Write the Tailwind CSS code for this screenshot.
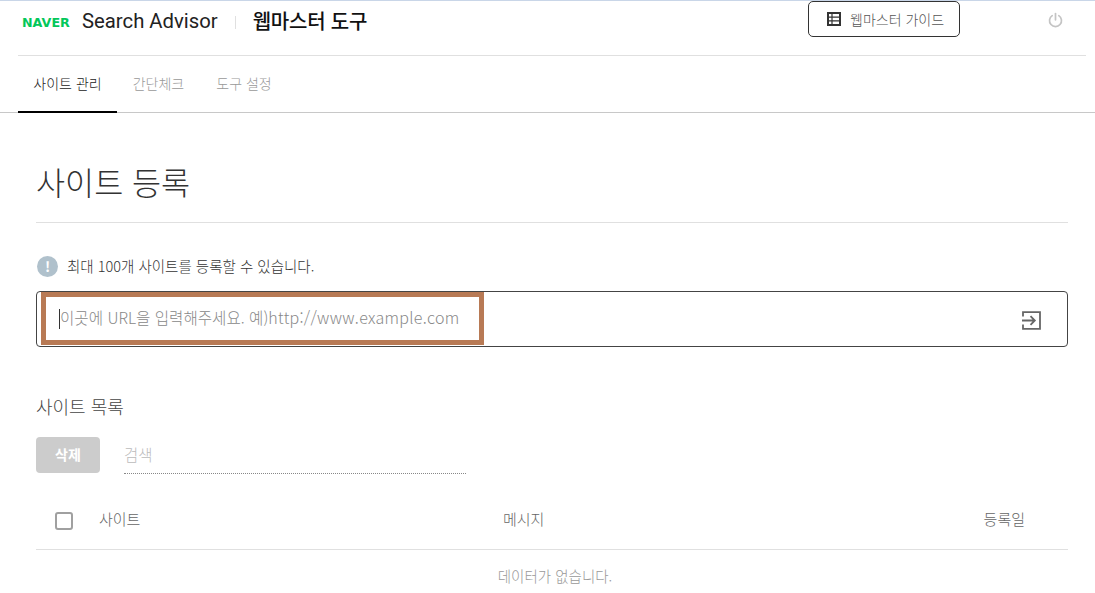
<!DOCTYPE html>
<html lang="ko">
<head>
    <meta charset="UTF-8">
    <meta name="viewport" content="width=device-width, initial-scale=1.0">
    <title>Search Advisor - 사이트 등록</title>
    <script src="https://cdn.jsdelivr.net/npm/@tailwindcss/browser@4"></script>
</head>
<body class="bg-white h-[593px] overflow-hidden font-['Noto_Sans_CJK_KR','Noto_Sans',sans-serif] font-light text-[#222]">
    <div class="h-px bg-[#c9d6e8]"></div>

    <!-- header -->
    <header class="mx-[18px] mr-[9px] h-[55px] border-b border-[#e0e0e0] flex items-start relative">
        <span class="ml-[4px] mt-[15px] w-[49px] text-[12.7px] leading-[14px] font-black text-[#03c75a] font-['DejaVu_Sans',sans-serif] whitespace-nowrap">NAVER</span>
        <span class="ml-[11px] mt-[6px] text-[20.3px] leading-[29px] font-normal font-['Roboto',sans-serif] text-[#222]">Search Advisor</span>
        <span class="ml-[17px] mt-[15px] h-[13px] w-px bg-[#e0e0e0]"></span>
        <span class="ml-[17px] mt-[5px] text-[20px] leading-[29px] font-medium text-[#111] tracking-[-0.2px]">웹마스터 도구</span>
        <button class="absolute left-[790px] top-0 w-[152px] h-[36px] border border-[#333] rounded-[5px] flex items-center pl-[18px] gap-[9px] text-[14px] text-[#555] font-light">
            <svg width="14" height="14" viewBox="0 0 14 14" fill="none" stroke="#333"><rect x="1" y="1" width="12" height="12" stroke-width="2"/><path d="M1 5.2h12M1 8.8h12M5 1v12" stroke-width="1.2"/></svg>
            웹마스터 가이드
        </button>
        <svg class="absolute left-[1029px] top-[11px]" width="17" height="17" viewBox="0 0 17 17" fill="none" stroke="#c4c4c4" stroke-width="1.7" stroke-linecap="round"><path d="M5.2 3.6a6 6 0 1 0 6.6 0"/><path d="M8.5 1.6v6.2"/></svg>
    </header>

    <!-- tabs -->
    <nav class="h-[57px] border-b border-[#c8c8c8] pl-[18px] flex text-[14px]">
        <a class="w-[99px] h-[57px] border-b-2 border-black text-center leading-[54px] text-[#222] font-light">사이트 관리</a>
        <a class="w-[83px] text-center leading-[54px] text-[#999]">간단체크</a>
        <a class="w-[72px] ml-[8px] text-center leading-[54px] text-[#999]">도구 설정</a>
    </nav>

    <main class="mx-[36px] w-[1032px]">
        <h1 class="h-[110px] border-b border-[#e0e0e0] pt-[44px] text-[31.6px] leading-[48px] font-light text-[#333]">사이트 등록</h1>

        <div class="flex items-center mt-[31px] h-[24px] gap-[9px] text-[14.5px] text-[#333] font-light">
            <span class="w-[21px] h-[21px] ml-px rounded-full bg-[#b0c1cc] text-white text-[14px] font-bold text-center leading-[21px]">!</span>
            최대 100개 사이트를 등록할 수 있습니다.
        </div>

        <div class="relative mt-[13px] h-[56px] border border-[#444] rounded-[4px] flex items-center">
            <span class="ml-[22px] w-px h-[20px] bg-[#333]"></span>
            <span class="text-[15.6px] leading-[24px] mb-[4px] text-[#888] whitespace-nowrap">이곳에 URL을 입력해주세요. 예)<span class="text-[16px] tracking-[0.3px]">http://www.example.com</span></span>
            <svg class="absolute left-[984px] top-[18px]" width="21" height="21" viewBox="0 0 21 21" fill="none" stroke="#666" stroke-width="1.8"><path d="M2 6.5V2.2h17v16.6H2v-4.3"/><path d="M1 10.5h12.5M9.5 6.2l4.3 4.3-4.3 4.3"/></svg>
            <div class="absolute left-[4px] top-0 w-[443px] h-[53px] border-[5px] border-[#b87a55]"></div>
        </div>

        <h2 class="mt-[44px] h-[30px] text-[18px] leading-[30px] text-[#444] font-light">사이트 목록</h2>

        <div class="flex mt-[16px] h-[37px]">
            <button class="w-[64px] h-[36px] pb-[2px] bg-[#cccccc] rounded-[4px] text-white text-[14px] font-bold">삭제</button>
            <div class="ml-[24px] w-[342px] h-[37px] border-b border-dotted border-[#888] text-[15.5px] leading-[35px] text-[#bbb]">검색</div>
        </div>

        <div class="flex items-center mt-[22px] h-[54px] pb-[6px] border-b border-[#e0e0e0] text-[15px] text-[#666] font-light">
            <span class="ml-[19px] w-[18px] h-[18px] mt-[2px] border-2 border-[#a0a0a0] rounded-[3px]"></span>
            <span class="ml-[26px] w-[404px]">사이트</span>
            <span class="flex-1">메시지</span>
            <span class="mr-[43px]">등록일</span>
        </div>
        <p class="h-[52px] pl-[6px] text-center text-[14.5px] leading-[52px] text-[#999]">데이터가 없습니다.</p>
    </main>
</body>
</html>
